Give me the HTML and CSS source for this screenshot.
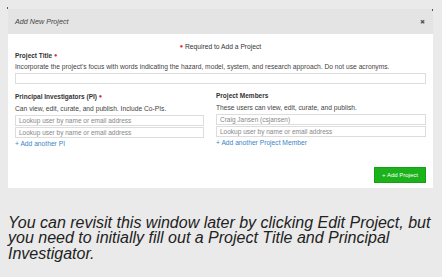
FILE: index.html
```html
<!DOCTYPE html>
<html lang="en">
<head>
    <meta charset="UTF-8">
    <title>Add New Project</title>
<link rel="stylesheet" href="styles.css">
</head>
<body>
    <div id="page">
        <span class="speck kiri"></span>
        <span class="speck kanan"></span>
        <div id="modal">
            <div class="kepala">
                <span class="judul">Add New Project</span>
                <span class="tutup">&#10006;</span>
            </div>
            <div class="isi">
                <p class="wajib"><span class="merah">&#9679;</span> Required to Add a Project</p>
                <div class="field">
                    <h4>Project Title <span class="merah">&#9679;</span></h4>
                    <p class="ket">Incorporate the project's focus with words indicating the hazard, model, system, and research approach. Do not use acronyms.</p>
                    <div class="kotak"></div>
                </div>
                <div class="kolom">
                    <div class="field">
                        <h4>Principal Investigators (PI) <span class="merah">&#9679;</span></h4>
                        <p class="ket">Can view, edit, curate, and publish. Include Co-PIs.</p>
                        <div class="kotak">Lookup user by name or email address</div>
                        <div class="kotak">Lookup user by name or email address</div>
                        <a class="tambah">+ Add another PI</a>
                    </div>
                    <div class="field">
                        <h4>Project Members</h4>
                        <p class="ket">These users can view, edit, curate, and publish.</p>
                        <div class="kotak">Craig Jansen (csjansen)</div>
                        <div class="kotak">Lookup user by name or email address</div>
                        <a class="tambah">+ Add another Project Member</a>
                    </div>
                </div>
                <div class="bawah">
                    <button>+ Add Project</button>
                </div>
            </div>
        </div>
        <p class="catatan">You can revisit this window later by clicking Edit Project, but you need to initially fill out a Project Title and Principal Investigator.</p>
    </div>
</body>
</html>
```
FILE: styles.css
```css
*{
    padding: 0;
    margin: 0;
    box-sizing: border-box;
}
body{
    background: #eaeaea;
    font-family: "Liberation Sans", Arial, sans-serif;
}
#page{
    position: relative;
    padding: 9px 9px 0 8px;
    height: 277px;
}
.speck{
    position: absolute;
    width: 1px;
    height: 2px;
    background: #555;
}
.kiri{ left: 7px; top: 7px; }
.kanan{ left: 432px; top: 9px; }
#modal{
    background: #fff;
}
.kepala{
    background: #e4e4e4;
    height: 25px;
    padding: 0 8px 0 7px;
    display: flex;
    align-items: center;
    justify-content: space-between;
    color: #444;
}
.judul{
    font-size: 7.2px;
    font-style: italic;
}
.tutup{
    font-size: 6px;
    color: #555;
}
.isi{
    padding: 8px 7px 5px 7px;
    color: #333;
}
.merah{
    color: #e0202c;
    font-size: 5.5px;
    vertical-align: 0.5px;
}
.wajib{
    text-align: center;
    font-size: 6.7px;
    line-height: 8px;
}
.field h4{
    font-size: 6.5px;
    line-height: 8px;
    font-weight: bold;
    color: #333;
}
.ket{
    font-size: 6.7px;
    line-height: 8px;
    margin: 4px 0 2px;
    color: #444;
}
.kotak{
    height: 11px;
    border: 1px solid #ddd;
    font-size: 6.5px;
    line-height: 9px;
    padding-left: 3px;
    color: #888;
}
.kotak + .kotak{
    margin-top: 1px;
}
.kolom{
    display: grid;
    grid-template-columns: 189px 210px;
    gap: 12px;
    margin-top: 8px;
}
.tambah{
    display: block;
    font-size: 6.7px;
    line-height: 8px;
    margin-top: 2px;
    color: #3b85c9;
}
.bawah{
    display: flex;
    justify-content: flex-end;
    margin-top: 19px;
}
button{
    width: 52px;
    height: 16px;
    background: #1cb21c;
    color: #fff;
    border: 1px solid #16a016;
    font-family: inherit;
    font-size: 6px;
}
.catatan{
    margin-top: 27px;
    font-size: 16px;
    line-height: 15.5px;
    font-style: italic;
    color: #222;
}
```
